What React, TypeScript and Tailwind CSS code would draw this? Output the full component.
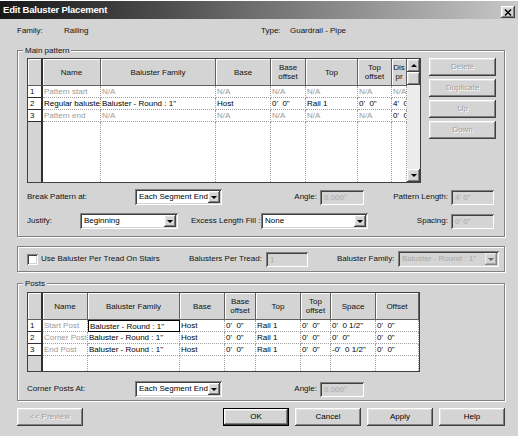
import React from "react";

const raised =
  "shadow-[inset_-1px_-1px_0_#404040,inset_1px_1px_0_#ffffff,inset_-2px_-2px_0_#808080,inset_2px_2px_0_#e4e4e4]";
const sunken =
  "shadow-[inset_1px_1px_0_#808080,inset_-1px_-1px_0_#ffffff,inset_2px_2px_0_#404040,inset_-2px_-2px_0_#d4d4d4]";
const etched = "border border-[#808080] shadow-[inset_1px_1px_0_#ffffff,1px_1px_0_#ffffff]";

function DownArrow() {
  return <span className="w-0 h-0 border-x-[3px] border-x-transparent border-t-[3px] border-t-black" />;
}

function UpArrow() {
  return <span className="w-0 h-0 border-x-[3px] border-x-transparent border-b-[3px] border-b-black" />;
}

function Button({ label, w, disabled, isDefault }: { label: string; w: string; disabled?: boolean; isDefault?: boolean }) {
  return (
    <div
      className={`${w} h-[18px] shrink-0 flex items-center justify-center bg-[#d4d4d4] ${
        isDefault ? "border border-black" : ""
      } ${raised} ${disabled ? "text-[#a0a0a0] [text-shadow:1px_1px_0_#ffffff]" : "text-black"}`}
    >
      {label}
    </div>
  );
}

function Select({ w, value, disabled }: { w: string; value: string; disabled?: boolean }) {
  return (
    <div className={`${w} h-[16px] shrink-0 flex p-[2px] ${disabled ? "bg-[#d4d4d4]" : "bg-white"} ${sunken}`}>
      <div className={`flex-1 pl-[2px] leading-[12px] whitespace-nowrap overflow-hidden ${disabled ? "text-[#a8a8a8]" : "text-black"}`}>
        {value}
      </div>
      <div className={`w-[12px] h-[12px] bg-[#d4d4d4] flex items-center justify-center ${raised} ${disabled ? "opacity-50" : ""}`}>
        <DownArrow />
      </div>
    </div>
  );
}

function TextBox({ w, value }: { w: string; value: string }) {
  return (
    <div className={`${w} h-[15px] shrink-0 bg-[#d4d4d4] ${sunken} pl-[4px] leading-[15px] text-[#a8a8a8] whitespace-nowrap`}>
      {value}
    </div>
  );
}

type Row = { dimName: boolean; cells: string[] };

function Grid({
  cols,
  headers,
  rows,
  fillerH,
  focusCell,
  scroll,
}: {
  cols: string[];
  headers: string[];
  rows: Row[];
  fillerH: string;
  focusCell?: [number, number];
  scroll?: boolean;
}) {
  return (
    <div className="flex shrink-0 border border-[#404040] bg-white">
      <div className="flex flex-col">
        <div className="flex h-[27px]">
          {headers.map((h, i) => (
            <div
              key={i}
              className={`${cols[i]} shrink-0 bg-[#d4d4d4] shadow-[inset_1px_1px_0_#ffffff] border-b border-[#606060] ${
                i === 0 ? "border-r-2 border-r-[#303030]" : "border-r"
              } flex flex-col items-center justify-center text-center leading-[9px] overflow-hidden whitespace-nowrap`}
            >
              {h.split("|").map((t, j) => (
                <span key={j}>{t}</span>
              ))}
            </div>
          ))}
        </div>
        {rows.map((r, ri) => (
          <div key={ri} className="flex h-[12px]">
            {r.cells.map((c, ci) => {
              const dim = c === "N/A" || (ci === 1 && r.dimName);
              const focus = focusCell && focusCell[0] === ri && focusCell[1] === ci;
              if (ci === 0)
                return (
                  <div key={ci} className={`${cols[0]} shrink-0 bg-white border-r-2 border-b border-[#303030] pl-[2px] leading-[11px]`}>
                    {c}
                  </div>
                );
              return (
                <div
                  key={ci}
                  className={`${cols[ci]} shrink-0 pl-[1px] leading-[11px] whitespace-pre overflow-hidden ${
                    focus ? "border border-black" : "border-r border-b border-dotted border-[#a0a0a0]"
                  } ${dim ? "text-[#9a9a9a]" : "text-black"}`}
                >
                  {c}
                </div>
              );
            })}
          </div>
        ))}
        <div className={`flex ${fillerH}`}>
          {cols.map((c, i) => (
            <div
              key={i}
              className={`${c} shrink-0 ${
                i === 0 ? "bg-[#d4d4d4] border-r-2 border-[#303030]" : "border-r border-dotted border-[#a0a0a0]"
              }`}
            />
          ))}
        </div>
      </div>
      {scroll && (
        <div className="w-[13px] flex flex-col bg-[#ececec]">
          <div className={`h-[13px] bg-[#d4d4d4] flex items-center justify-center ${raised}`}>
            <UpArrow />
          </div>
          <div className={`h-[13px] bg-[#d4d4d4] ${raised}`} />
          <div className="flex-1" />
          <div className={`h-[13px] bg-[#d4d4d4] flex items-center justify-center ${raised}`}>
            <DownArrow />
          </div>
        </div>
      )}
    </div>
  );
}

const mainCols = ["w-[15px]", "w-[58px]", "w-[115px]", "w-[55px]", "w-[35px]", "w-[52px]", "w-[34px]", "w-[15px]"];
const mainHeaders = ["", "Name", "Baluster Family", "Base", "Base|offset", "Top", "Top|offset", "Dis|pr"];
const mainRows: Row[] = [
  { dimName: true, cells: ["1", "Pattern start", "N/A", "N/A", "N/A", "N/A", "N/A", "N/A"] },
  { dimName: false, cells: ["2", "Regular baluster", "Baluster - Round : 1\"", "Host", "0'  0\"", "Rail 1", "0'  0\"", "4'  0\""] },
  { dimName: true, cells: ["3", "Pattern end", "N/A", "N/A", "N/A", "N/A", "N/A", "0'  0\""] },
];

const postCols = ["w-[15px]", "w-[45px]", "w-[92px]", "w-[45px]", "w-[31px]", "w-[45px]", "w-[30px]", "w-[45px]", "w-[43px]"];
const postHeaders = ["", "Name", "Baluster Family", "Base", "Base|offset", "Top", "Top|offset", "Space", "Offset"];
const postRows: Row[] = [
  { dimName: true, cells: ["1", "Start Post", "Baluster - Round : 1\"", "Host", "0'  0\"", "Rail 1", "0'  0\"", "0'  0 1/2\"", "0'  0\""] },
  { dimName: true, cells: ["2", "Corner Post", "Baluster - Round : 1\"", "Host", "0'  0\"", "Rail 1", "0'  0\"", "0'  0\"", "0'  0\""] },
  { dimName: true, cells: ["3", "End Post", "Baluster - Round : 1\"", "Host", "0'  0\"", "Rail 1", "0'  0\"", "-0'  0 1/2\"", "0'  0\""] },
];

export default function App() {
  return (
    <div className="w-[518px] h-[436px] bg-[#d4d4d4] flex flex-col border-t border-white overflow-hidden text-[8px] text-[#111] font-['Liberation_Sans',Arial,sans-serif]">
      {/* Title bar */}
      <div className="h-[18px] flex items-start justify-between bg-linear-to-r from-[#181818] via-[#707070] to-[#c8c8c8] pl-[3px] pr-[3px]">
        <span className="mt-[3px] text-white font-bold text-[9.5px] tracking-[-0.2px] leading-[12px]">Edit Baluster Placement</span>
        <div className={`mt-[5px] w-[14px] h-[12px] bg-[#d4d4d4] flex items-center justify-center ${raised}`}>
          <svg width="8" height="7" viewBox="0 0 8 7">
            <path d="M1 0.5L7 6.5M7 0.5L1 6.5" stroke="black" strokeWidth="1.5" />
          </svg>
        </div>
      </div>

      <div className="flex flex-col pl-[17px] pr-[13px]">
        {/* Family / Type */}
        <div className="mt-[5px] h-[13px] flex items-center">
          <span className="w-[47px]">Family:</span>
          <span className="w-[197px]">Railing</span>
          <span className="w-[29px]">Type:</span>
          <span>Guardrail - Pipe</span>
        </div>

        {/* Main pattern */}
        <fieldset className={`mt-[7px] ${etched}`}>
          <legend className="ml-[5px] px-[2px] leading-[13px] bg-[#d4d4d4]">Main pattern</legend>
          <div className="pl-[9px] pb-[7px] flex flex-col">
            <div className="mt-[1px] flex gap-[8px]">
              <Grid cols={mainCols} headers={mainHeaders} rows={mainRows} fillerH="h-[60px]" scroll />
              <div className="flex flex-col gap-[3px]">
                <Button label="Delete" w="w-[67px]" disabled />
                <Button label="Duplicate" w="w-[67px]" disabled />
                <Button label="Up" w="w-[67px]" disabled />
                <Button label="Down" w="w-[67px]" disabled />
              </div>
            </div>
            <div className="mt-[6px] h-[16px] flex items-center">
              <span className="w-[108px]">Break Pattern at:</span>
              <Select w="w-[87px]" value="Each Segment End" />
              <span className="w-[98px] text-right pr-[3px]">Angle:</span>
              <TextBox w="w-[44px]" value="0.000°" />
              <span className="w-[87px] text-right pr-[3px]">Pattern Length:</span>
              <TextBox w="w-[43px]" value={"4'  0\""} />
            </div>
            <div className="mt-[8px] h-[16px] flex items-center">
              <span className="w-[53px]">Justify:</span>
              <Select w="w-[98px]" value="Beginning" />
              <span className="w-[83px] pl-[13px] whitespace-nowrap">Excess Length Fill :</span>
              <Select w="w-[107px]" value="None" />
              <span className="w-[83px] text-right pr-[3px]">Spacing:</span>
              <TextBox w="w-[43px]" value={"0'  0\""} />
            </div>
          </div>
        </fieldset>

        {/* Baluster per tread */}
        <div className={`mt-[9px] h-[26px] ${etched} flex items-center pl-[9px]`}>
          <div className={`w-[11px] h-[11px] bg-white ${sunken}`} />
          <span className="ml-[3px] w-[148px]">Use Baluster Per Tread On Stairs</span>
          <span className="w-[77px] whitespace-nowrap">Balusters Per Tread:</span>
          <TextBox w="w-[42px]" value="1" />
          <span className="w-[29px]" />
          <span className="w-[61px] whitespace-nowrap">Baluster Family:</span>
          <Select w="w-[101px]" value={"Baluster - Round : 1\""} disabled />
        </div>

        {/* Posts */}
        <fieldset className={`mt-[5px] ${etched}`}>
          <legend className="ml-[5px] px-[2px] leading-[13px] bg-[#d4d4d4]">Posts</legend>
          <div className="pl-[9px] pb-[3px] flex flex-col">
            <div className="mt-[2px] flex">
              <Grid cols={postCols} headers={postHeaders} rows={postRows} fillerH="h-[15px]" focusCell={[0, 2]} />
            </div>
            <div className="mt-[9px] h-[16px] flex items-center">
              <span className="w-[108px]">Corner Posts At:</span>
              <Select w="w-[87px]" value="Each Segment End" />
              <span className="w-[98px] text-right pr-[3px]">Angle:</span>
              <TextBox w="w-[44px]" value="0.000°" />
            </div>
          </div>
        </fieldset>

        {/* Bottom buttons */}
        <div className="mt-[7px] flex">
          <Button label="<< Preview" w="w-[66px]" disabled />
          <div className="ml-auto flex gap-[6px]">
            <Button label="OK" w="w-[66px]" isDefault />
            <Button label="Cancel" w="w-[66px]" />
            <Button label="Apply" w="w-[66px]" />
            <Button label="Help" w="w-[66px]" />
          </div>
        </div>
      </div>
    </div>
  );
}
